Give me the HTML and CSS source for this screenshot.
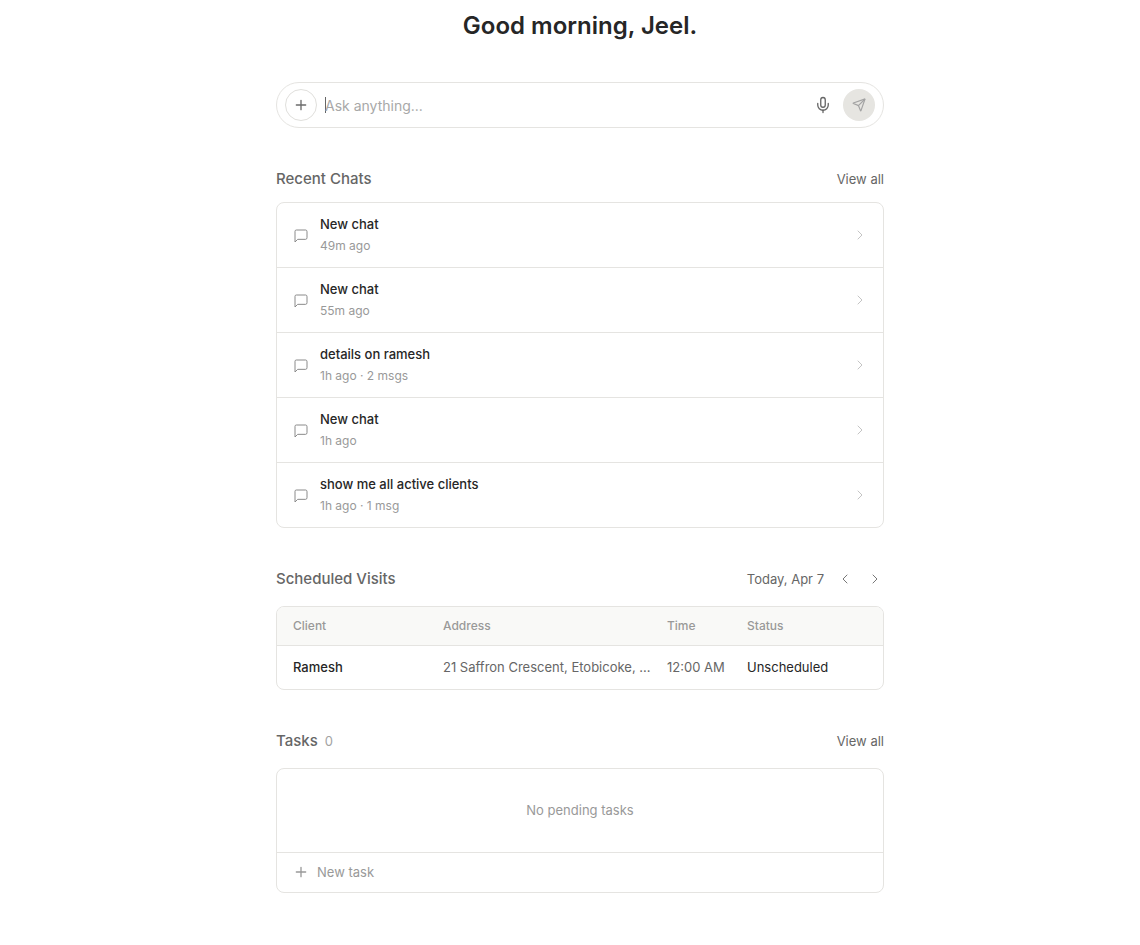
FILE: index.html
```html
<!DOCTYPE html>
<html lang="en">
<head>
    <meta charset="UTF-8">
    <meta name="viewport" content="width=device-width, initial-scale=1.0">
    <title>Home</title>
    <link rel="stylesheet" href="styles.css">
</head>
<body>
    <div class="container">
        <h1 class="greeting">Good morning, Jeel.</h1>

        <div class="ask-box">
            <button class="add-btn">
                <svg width="16" height="16" viewBox="0 0 24 24" class="icon"><path d="M5 12h14M12 5v14"/></svg>
            </button>
            <div class="ask-input"><span class="caret"></span>Ask anything...</div>
            <svg width="18" height="18" viewBox="0 0 24 24" class="icon mic"><path d="M12 2a3 3 0 0 0-3 3v7a3 3 0 0 0 6 0V5a3 3 0 0 0-3-3Z"/><path d="M19 10v2a7 7 0 0 1-14 0v-2"/><path d="M12 19v3"/></svg>
            <button class="send-btn">
                <svg width="14" height="14" viewBox="0 0 24 24" class="icon"><path d="M14.5 21.7a.5.5 0 0 0 .9 0L22 2.6a.5.5 0 0 0-.6-.6L2.3 8.6a.5.5 0 0 0 0 .9l8 3.2a2 2 0 0 1 1.1 1.1Z"/><path d="M21.9 2.1 11 13"/></svg>
            </button>
        </div>

        <div class="section-head">
            <h2>Recent Chats</h2>
            <a class="view-all">View all</a>
        </div>
        <div class="card">
            <div class="chat-row">
                <svg width="16" height="16" viewBox="0 0 24 24" class="icon chat-icon"><path d="M21 15a2 2 0 0 1-2 2H7l-4 4V5a2 2 0 0 1 2-2h14a2 2 0 0 1 2 2z"/></svg>
                <div class="chat-text">
                    <div class="chat-title">New chat</div>
                    <div class="chat-meta">49m ago</div>
                </div>
                <svg width="16" height="16" viewBox="0 0 24 24" class="icon chevron"><path d="m9 18 6-6-6-6"/></svg>
            </div>
            <div class="chat-row">
                <svg width="16" height="16" viewBox="0 0 24 24" class="icon chat-icon"><path d="M21 15a2 2 0 0 1-2 2H7l-4 4V5a2 2 0 0 1 2-2h14a2 2 0 0 1 2 2z"/></svg>
                <div class="chat-text">
                    <div class="chat-title">New chat</div>
                    <div class="chat-meta">55m ago</div>
                </div>
                <svg width="16" height="16" viewBox="0 0 24 24" class="icon chevron"><path d="m9 18 6-6-6-6"/></svg>
            </div>
            <div class="chat-row">
                <svg width="16" height="16" viewBox="0 0 24 24" class="icon chat-icon"><path d="M21 15a2 2 0 0 1-2 2H7l-4 4V5a2 2 0 0 1 2-2h14a2 2 0 0 1 2 2z"/></svg>
                <div class="chat-text">
                    <div class="chat-title">details on ramesh</div>
                    <div class="chat-meta">1h ago · 2 msgs</div>
                </div>
                <svg width="16" height="16" viewBox="0 0 24 24" class="icon chevron"><path d="m9 18 6-6-6-6"/></svg>
            </div>
            <div class="chat-row">
                <svg width="16" height="16" viewBox="0 0 24 24" class="icon chat-icon"><path d="M21 15a2 2 0 0 1-2 2H7l-4 4V5a2 2 0 0 1 2-2h14a2 2 0 0 1 2 2z"/></svg>
                <div class="chat-text">
                    <div class="chat-title">New chat</div>
                    <div class="chat-meta">1h ago</div>
                </div>
                <svg width="16" height="16" viewBox="0 0 24 24" class="icon chevron"><path d="m9 18 6-6-6-6"/></svg>
            </div>
            <div class="chat-row">
                <svg width="16" height="16" viewBox="0 0 24 24" class="icon chat-icon"><path d="M21 15a2 2 0 0 1-2 2H7l-4 4V5a2 2 0 0 1 2-2h14a2 2 0 0 1 2 2z"/></svg>
                <div class="chat-text">
                    <div class="chat-title">show me all active clients</div>
                    <div class="chat-meta">1h ago · 1 msg</div>
                </div>
                <svg width="16" height="16" viewBox="0 0 24 24" class="icon chevron"><path d="m9 18 6-6-6-6"/></svg>
            </div>
        </div>

        <div class="section-head spaced">
            <h2>Scheduled Visits</h2>
            <div class="date-nav">
                <span class="date-label">Today, Apr 7</span>
                <svg width="16" height="16" viewBox="0 0 24 24" class="icon nav-arrow"><path d="m15 18-6-6 6-6"/></svg>
                <svg width="16" height="16" viewBox="0 0 24 24" class="icon nav-arrow"><path d="m9 18 6-6-6-6"/></svg>
            </div>
        </div>
        <div class="card">
            <table class="visits">
                <thead>
                    <tr>
                        <th class="col-client">Client</th>
                        <th class="col-address">Address</th>
                        <th class="col-time">Time</th>
                        <th>Status</th>
                    </tr>
                </thead>
                <tbody>
                    <tr>
                        <td class="client-name">Ramesh</td>
                        <td class="address">21 Saffron Crescent, Etobicoke, ...</td>
                        <td class="time">12:00 AM</td>
                        <td class="status">Unscheduled</td>
                    </tr>
                </tbody>
            </table>
        </div>

        <div class="section-head spaced">
            <h2>Tasks <span class="count">0</span></h2>
            <a class="view-all">View all</a>
        </div>
        <div class="card">
            <div class="empty">No pending tasks</div>
            <div class="new-task">
                <svg width="16" height="16" viewBox="0 0 24 24" class="icon"><path d="M5 12h14M12 5v14"/></svg>
                New task
            </div>
        </div>
    </div>
</body>
</html>
```
FILE: styles.css
```css
* {
    box-sizing: border-box;
}
body {
    font-family: Inter, "Liberation Sans", sans-serif;
    margin: 0;
    padding-left: 20px;
    background-color: white;
    color: #1c1c1c;
}
.container {
    width: 608px;
    margin: 0 auto;
    padding: 11px 0 52px;
}
.greeting {
    margin: 0;
    font-size: 24px;
    line-height: 29px;
    font-weight: 600;
    text-align: center;
    color: #262626;
}
.icon {
    fill: none;
    stroke: currentColor;
    stroke-width: 2;
    stroke-linecap: round;
    stroke-linejoin: round;
    flex-shrink: 0;
    display: block;
}
.ask-box {
    display: flex;
    align-items: center;
    height: 46px;
    margin-top: 42px;
    padding: 0 8px;
    border: 1px solid #e5e4e1;
    border-radius: 23px;
}
.add-btn {
    display: flex;
    align-items: center;
    justify-content: center;
    width: 32px;
    height: 32px;
    padding: 0;
    background: white;
    border: 1px solid #e0dfdc;
    border-radius: 50%;
    color: #6b6b6b;
}
.ask-input {
    flex: 1;
    display: flex;
    align-items: center;
    margin-left: 8px;
    font-size: 14px;
    color: #a8a8a8;
}
.caret {
    width: 1px;
    height: 16px;
    background-color: #666;
    margin-right: -1px;
}
.mic {
    color: #666;
    margin-right: 11px;
    stroke-width: 1.75;
}
.send-btn {
    display: flex;
    align-items: center;
    justify-content: center;
    width: 32px;
    height: 32px;
    padding: 0;
    background-color: #e6e5e1;
    border: none;
    border-radius: 50%;
    color: #a3a3a3;
}
.section-head {
    display: flex;
    justify-content: space-between;
    align-items: center;
    height: 20px;
    margin-top: 40px;
    margin-bottom: 14px;
}
.section-head.spaced {
    margin-bottom: 18px;
}
.section-head h2 {
    margin: 0;
    font-size: 15px;
    font-weight: 500;
    color: #666;
}
.count {
    margin-left: 3px;
    font-weight: 400;
    font-size: 13px;
    color: #a3a3a3;
}
.view-all {
    padding-top: 2px;
    font-size: 13px;
    color: #666;
}
.card {
    border: 1px solid #e5e4e1;
    border-radius: 8px;
    overflow: hidden;
}
.chat-row {
    display: flex;
    align-items: center;
    height: 65px;
    padding: 0 16px;
    border-bottom: 1px solid #e5e4e1;
}
.chat-row:last-child {
    height: 64px;
    border-bottom: none;
}
.chat-icon {
    color: #8a8a8a;
    stroke-width: 1.5;
    margin-top: 1px;
}
.chat-text {
    flex: 1;
    margin-left: 11px;
    padding-bottom: 1px;
}
.chat-title {
    font-size: 13px;
    line-height: 18px;
    font-weight: 500;
    color: #262626;
}
.chat-meta {
    margin-top: 5px;
    font-size: 12px;
    line-height: 16px;
    color: #999;
}
.chevron {
    color: #c4c4c4;
    stroke-width: 1.5;
    margin-right: -1px;
}
.date-nav {
    display: flex;
    align-items: center;
    gap: 14px;
    margin-top: 2px;
    margin-right: 1px;
}
.date-label {
    font-size: 13px;
    color: #666;
    margin-right: -1px;
}
.nav-arrow {
    color: #777;
    stroke-width: 1.5;
}
.visits {
    width: 100%;
    border-collapse: collapse;
    table-layout: fixed;
}
.visits th {
    height: 38px;
    padding: 0 0 0 16px;
    text-align: left;
    font-size: 12px;
    font-weight: 500;
    color: #999;
    background-color: #f9f9f7;
    border-bottom: 1px solid #e5e4e1;
}
.visits td {
    height: 44px;
    padding: 0 0 0 16px;
    font-size: 13px;
    white-space: nowrap;
}
.col-client {
    width: 150px;
}
.col-address {
    width: 224px;
}
.col-time {
    width: 80px;
}
.client-name {
    font-weight: 500;
    color: #262626;
}
.address {
    color: #666;
}
.time {
    color: #666;
}
.status {
    color: #262626;
}
.empty {
    height: 84px;
    padding-bottom: 1px;
    display: flex;
    align-items: center;
    justify-content: center;
    font-size: 13px;
    color: #999;
    border-bottom: 1px solid #e5e4e1;
}
.new-task {
    display: flex;
    align-items: center;
    gap: 8px;
    height: 39px;
    padding: 0 16px 2px;
    font-size: 13px;
    color: #999;
}
```
